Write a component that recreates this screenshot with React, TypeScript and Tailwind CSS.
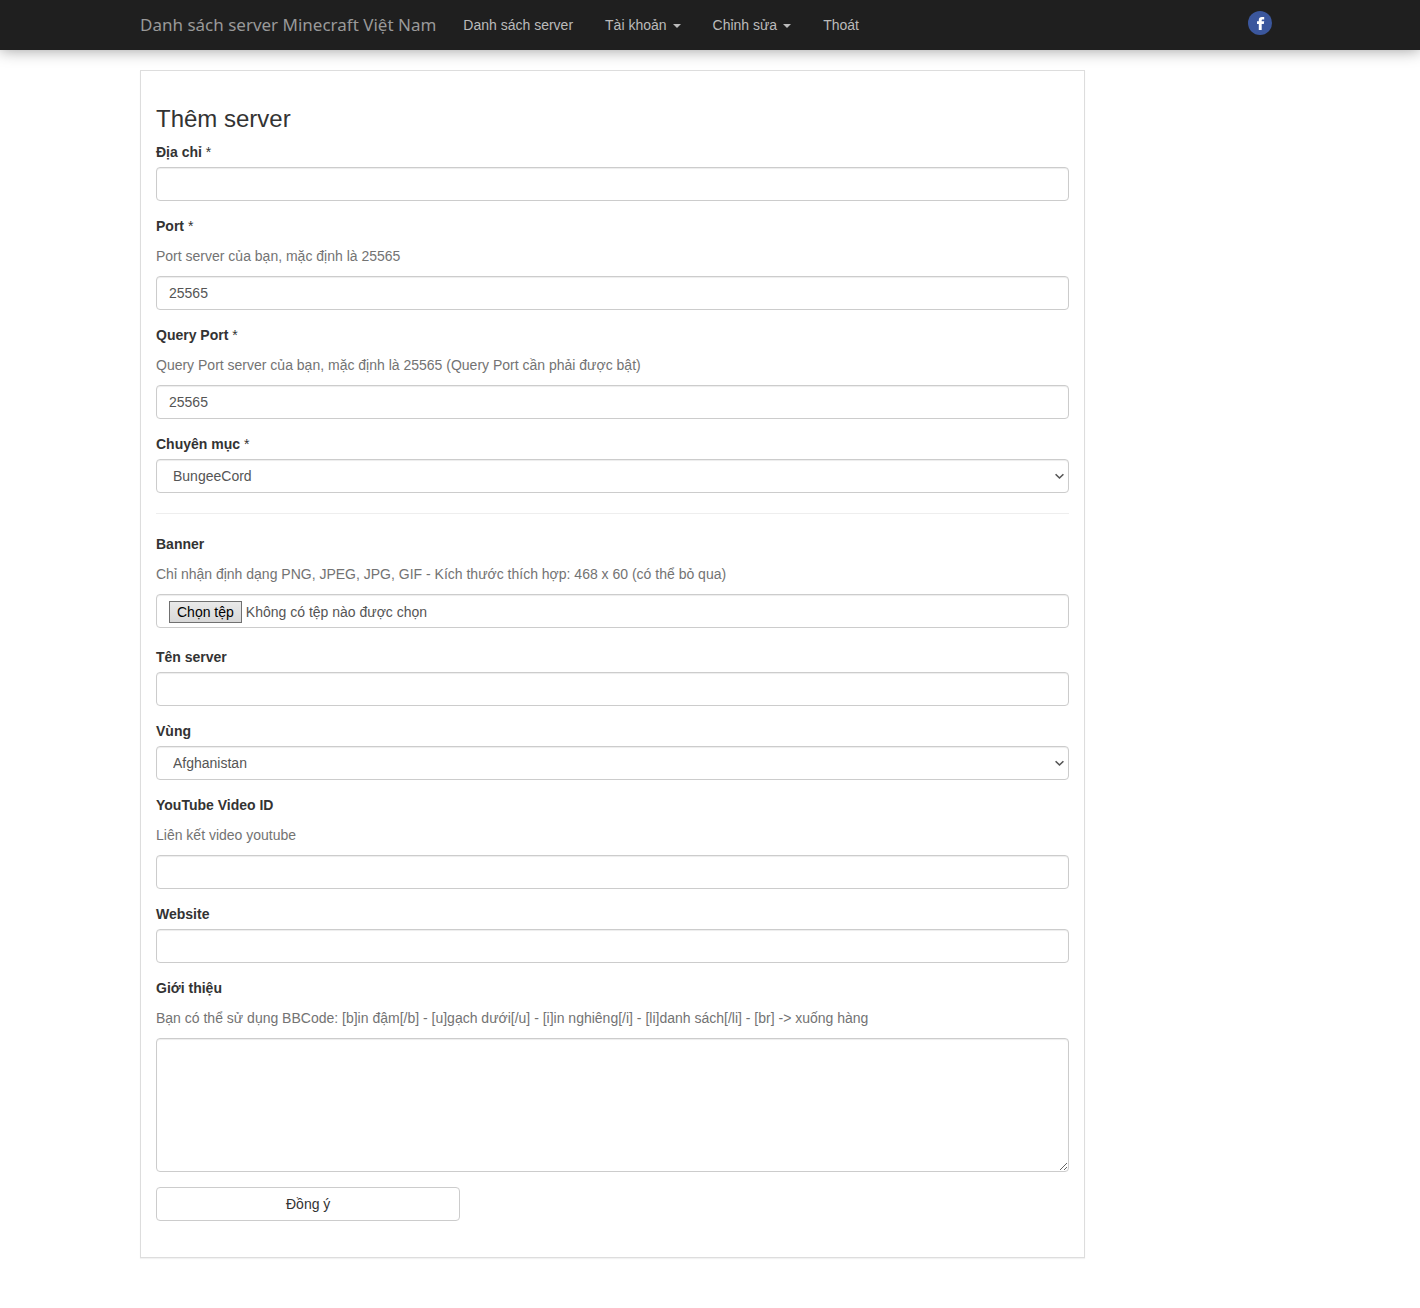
import { useState } from "react";
import type { ReactNode } from "react";

const CONTROL =
  "block h-[34px] w-full rounded border border-[#ccc] bg-white px-3 text-sm text-[#555] shadow-[inset_0_1px_1px_rgba(0,0,0,0.075)] outline-none focus:border-[#66afe9]";

const NAV_ITEMS = [
  { label: "Danh sách server", menu: false },
  { label: "Tài khoản", menu: true },
  { label: "Chỉnh sửa", menu: true },
  { label: "Thoát", menu: false },
];

const CATEGORIES = ["BungeeCord", "Survival", "Skyblock", "Creative", "PvP"];
const REGIONS = ["Afghanistan", "Australia", "Singapore", "Việt Nam"];

type FieldProps = {
  id: string;
  label: string;
  required?: boolean;
  help?: string;
  children: ReactNode;
};

function Field({ id, label, required, help, children }: FieldProps) {
  return (
    <div className="mb-[15px]">
      <label htmlFor={id} className="mb-[5px] block font-bold">
        {label}
        {required && <span className="font-normal"> *</span>}
      </label>
      {help && <p className="my-2.5 text-[#737373]">{help}</p>}
      {children}
    </div>
  );
}

function Select({ id, options }: { id: string; options: string[] }) {
  return (
    <div className="relative">
      <select id={id} className={`${CONTROL} appearance-none pl-4`}>
        {options.map((o) => <option key={o}>{o}</option>)}
      </select>
      <svg className="pointer-events-none absolute top-3.5 right-[5px] h-[7px] w-[9px]" viewBox="0 0 9 7" fill="none" stroke="#555" strokeWidth="1.6">
        <path d="M0.6 1.2 4.5 5 8.4 1.2" />
      </svg>
    </div>
  );
}

function Navbar() {
  return (
    <header className="h-[50px] bg-[#1f1f1f] shadow-[0_0_15px_rgba(0,0,0,0.4)]">
      <nav className="mx-auto flex h-full max-w-[1170px] items-center px-[15px]">
        <a href="#" className="mr-[11px] font-['Noto_Sans','Open_Sans',sans-serif] text-[17px] leading-5 text-[#999]">
          Danh sách server Minecraft Việt Nam
        </a>
        <ul className="flex">
          {NAV_ITEMS.map((item) => (
            <li key={item.label}>
              <a href="#" className="flex items-center px-4 text-[#bbb] hover:text-white">
                {item.label}
                {item.menu && <span className="mt-0.5 ml-1.5 border-x-4 border-t-4 border-x-transparent" />}
              </a>
            </li>
          ))}
        </ul>
        <a href="#" aria-label="Facebook" className="mr-2 mb-1 ml-auto">
          <svg className="h-6 w-6" viewBox="0 0 24 24">
            <circle cx="12" cy="12" r="12" fill="#3b579d" />
            <path fill="#fff" d="M10.8 19v-6H9v-2.7h1.8V9c0-2.1 1.1-3.1 3.1-3.1h2.3v2.5h-1.5c-.8 0-1 .3-1 1v.9h2.5l-.4 2.7h-2.1v6z" />
          </svg>
        </a>
      </nav>
    </header>
  );
}

export default function App() {
  const [fileName, setFileName] = useState("Không có tệp nào được chọn");

  return (
    <div className="bg-white pb-[50px] font-['Liberation_Sans',Arial,sans-serif] text-sm leading-5 text-[#333]">
      <Navbar />

      <main className="mx-auto mt-5 max-w-[1170px] px-[15px]">
        <form
          className="w-full max-w-[945px] border border-[#ddd] bg-white px-[15px] pt-[35px] pb-9 shadow-[0_1px_1px_rgba(0,0,0,0.05)]"
          onSubmit={(e) => e.preventDefault()}
        >
          <h1 className="mb-2.5 text-2xl leading-[26px]">Thêm server</h1>

          <Field id="address" label="Địa chỉ" required>
            <input id="address" type="text" className={CONTROL} />
          </Field>
          <Field id="port" label="Port" required help="Port server của bạn, mặc định là 25565">
            <input id="port" type="text" defaultValue="25565" className={CONTROL} />
          </Field>
          <Field id="query" label="Query Port" required help="Query Port server của bạn, mặc định là 25565 (Query Port cần phải được bật)">
            <input id="query" type="text" defaultValue="25565" className={CONTROL} />
          </Field>
          <Field id="category" label="Chuyên mục" required>
            <Select id="category" options={CATEGORIES} />
          </Field>

          <hr className="my-5 border-[#eee]" />

          <Field id="banner" label="Banner" help="Chỉ nhận định dạng PNG, JPEG, JPG, GIF - Kích thước thích hợp: 468 x 60 (có thể bỏ qua)">
            <label htmlFor="banner" className={`${CONTROL} relative mb-[19px] pt-1.5`}>
              <input
                id="banner"
                type="file"
                accept="image/png,image/jpeg,image/gif"
                className="sr-only"
                onChange={(e) => setFileName(e.target.files?.[0]?.name ?? "Không có tệp nào được chọn")}
              />
              <span className="flex items-center gap-1">
                <span className="border border-[#707070] bg-linear-to-b from-[#e9e9e9] to-[#d8d8d8] px-[7px] text-black">Chọn tệp</span>
                {fileName}
              </span>
            </label>
          </Field>
          <Field id="name" label="Tên server">
            <input id="name" type="text" className={CONTROL} />
          </Field>
          <Field id="region" label="Vùng">
            <Select id="region" options={REGIONS} />
          </Field>
          <Field id="youtube" label="YouTube Video ID" help="Liên kết video youtube">
            <input id="youtube" type="text" className={CONTROL} />
          </Field>
          <Field id="website" label="Website">
            <input id="website" type="text" className={CONTROL} />
          </Field>
          <Field
            id="about"
            label="Giới thiệu"
            help="Bạn có thể sử dụng BBCode: [b]in đậm[/b] - [u]gạch dưới[/u] - [i]in nghiêng[/i] - [li]danh sách[/li] - [br] -> xuống hàng"
          >
            <textarea id="about" rows={6} className={`${CONTROL} h-auto resize-y py-1.5`} />
          </Field>

          <button type="submit" className="block h-[34px] w-1/3 rounded border border-[#ccc] bg-white text-center hover:bg-[#e6e6e6]">
            Đồng ý
          </button>
        </form>
      </main>
    </div>
  );
}
